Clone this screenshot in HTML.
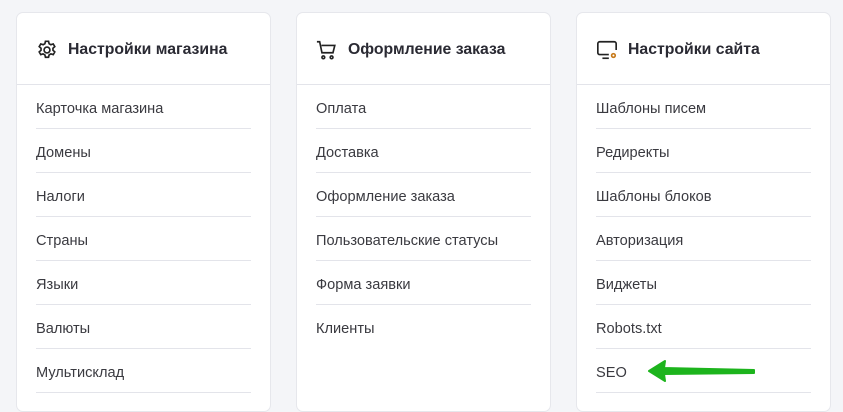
<!DOCTYPE html>
<html><head><meta charset="utf-8"><style>
body{margin:0;width:843px;height:402px;background:#f4f5f8;font-family:"Liberation Sans",sans-serif;overflow:hidden;position:relative}
.card{position:absolute;top:12px;width:255px;height:400px;background:#fff;border:1px solid #e6e7ec;border-radius:7px;box-sizing:border-box}
.hd{height:69px;padding-top:2px;border-bottom:1px solid #e3e4ea;display:flex;align-items:center;padding-left:19px;font-weight:bold;font-size:15.8px;color:#2a2a33}
.hd svg{margin-right:10px}
.it{margin:0 19px;height:41px;padding-top:2px;border-bottom:1px solid #e3e4ea;line-height:44px;font-size:14.6px;color:#3a3a40;overflow:visible}
.it.n{border-bottom:none}
</style></head><body>
<div class="card" style="left:16px">
<div class="hd"><svg width="22" height="22" viewBox="0 0 24 24" fill="none" stroke="#222" stroke-width="1.8"><circle cx="12" cy="12" r="3.2"/><path d="M10.3 2.5h3.4l.6 2.6 1.9 1.1 2.6-.8 1.7 2.9-2 1.8v2.2l2 1.8-1.7 2.9-2.6-.8-1.9 1.1-.6 2.6h-3.4l-.6-2.6-1.9-1.1-2.6.8-1.7-2.9 2-1.8v-2.2l-2-1.8 1.7-2.9 2.6.8 1.9-1.1z"/></svg>Настройки магазина</div>
<div class="it">Карточка магазина</div><div class="it">Домены</div><div class="it">Налоги</div><div class="it">Страны</div><div class="it">Языки</div><div class="it">Валюты</div><div class="it">Мультисклад</div>
</div>
<div class="card" style="left:296px">
<div class="hd"><svg width="22" height="22" viewBox="0 0 24 24" fill="none" stroke="#222" stroke-width="1.8"><path d="M1 3h3l2.5 12h12l2-8H6"/><circle cx="8" cy="20" r="1.5"/><circle cx="17" cy="20" r="1.5"/></svg>Оформление заказа</div>
<div class="it">Оплата</div><div class="it">Доставка</div><div class="it">Оформление заказа</div><div class="it">Пользовательские статусы</div><div class="it">Форма заявки</div><div class="it n">Клиенты</div>
</div>
<div class="card" style="left:576px">
<div class="hd"><svg width="22" height="22" viewBox="0 0 24 24" fill="none" stroke="#222" stroke-width="1.8"><path d="M14 17H4a2 2 0 0 1-2-2V5a2 2 0 0 1 2-2h16a2 2 0 0 1 2 2v7"/><path d="M7 21h7"/><circle cx="19" cy="18" r="2" stroke="#c77a1a"/></svg>Настройки сайта</div>
<div class="it">Шаблоны писем</div><div class="it">Редиректы</div><div class="it">Шаблоны блоков</div><div class="it">Авторизация</div><div class="it">Виджеты</div><div class="it">Robots.txt</div><div class="it">SEO</div>
</div>
<svg style="position:absolute;left:645px;top:358px" width="115" height="26" viewBox="0 0 115 26"><path d="M4 13 L20 3 L19 10 L109 12 L109 15 L19 16 L20 23 Z" fill="#1db41d" stroke="#1db41d" stroke-width="2" stroke-linejoin="round"/></svg>
</body></html>
